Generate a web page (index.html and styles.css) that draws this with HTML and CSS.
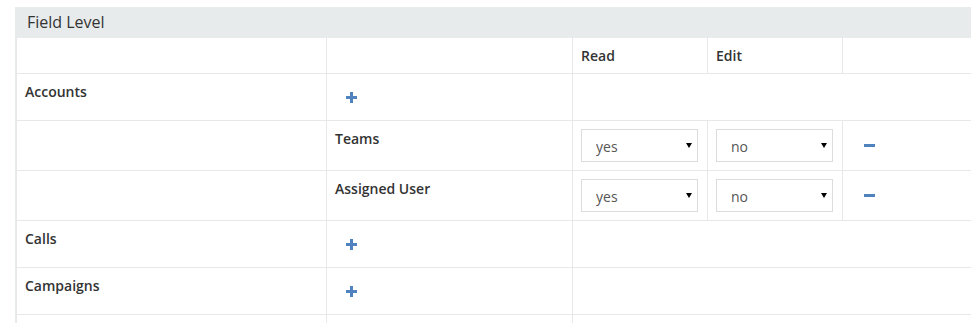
FILE: index.html
```html
<!DOCTYPE html>
<html lang="en">
<head>
    <meta charset="UTF-8">
    <meta name="viewport" content="width=device-width, initial-scale=1.0">
    <title>Field Level</title>
    <link rel="stylesheet" href="styles.css">
</head>
<body>
    <div class="panel">
        <div class="panel-heading">Field Level</div>
        <table class="field-table">
            <thead>
                <tr>
                    <th class="col-scope"></th>
                    <th class="col-field"></th>
                    <th class="col-action">Read</th>
                    <th class="col-action">Edit</th>
                    <th></th>
                </tr>
            </thead>
            <tbody>
                <tr>
                    <td class="scope-name">Accounts</td>
                    <td><button class="icon-btn add-btn" title="Add field"><svg width="11" height="11" viewBox="0 0 11 11"><path d="M4 0h3v4h4v3H7v4H4V7H0V4h4z"/></svg></button></td>
                    <td colspan="3"></td>
                </tr>
                <tr>
                    <td></td>
                    <td class="field-name">Teams</td>
                    <td>
                        <div class="select-wrap">
                            <select class="level-select">
                                <option selected>yes</option>
                                <option>no</option>
                            </select>
                        </div>
                    </td>
                    <td>
                        <div class="select-wrap">
                            <select class="level-select">
                                <option>yes</option>
                                <option selected>no</option>
                            </select>
                        </div>
                    </td>
                    <td><button class="icon-btn remove-btn" title="Remove"><svg width="11" height="3" viewBox="0 0 11 3"><rect width="11" height="3"/></svg></button></td>
                </tr>
                <tr>
                    <td></td>
                    <td class="field-name">Assigned User</td>
                    <td>
                        <div class="select-wrap">
                            <select class="level-select">
                                <option selected>yes</option>
                                <option>no</option>
                            </select>
                        </div>
                    </td>
                    <td>
                        <div class="select-wrap">
                            <select class="level-select">
                                <option>yes</option>
                                <option selected>no</option>
                            </select>
                        </div>
                    </td>
                    <td><button class="icon-btn remove-btn" title="Remove"><svg width="11" height="3" viewBox="0 0 11 3"><rect width="11" height="3"/></svg></button></td>
                </tr>
                <tr>
                    <td class="scope-name">Calls</td>
                    <td><button class="icon-btn add-btn" title="Add field"><svg width="11" height="11" viewBox="0 0 11 11"><path d="M4 0h3v4h4v3H7v4H4V7H0V4h4z"/></svg></button></td>
                    <td colspan="3"></td>
                </tr>
                <tr>
                    <td class="scope-name">Campaigns</td>
                    <td><button class="icon-btn add-btn" title="Add field"><svg width="11" height="11" viewBox="0 0 11 11"><path d="M4 0h3v4h4v3H7v4H4V7H0V4h4z"/></svg></button></td>
                    <td colspan="3"></td>
                </tr>
                <tr class="row-partial">
                    <td></td>
                    <td></td>
                    <td colspan="3"></td>
                </tr>
            </tbody>
        </table>
    </div>
</body>
</html>
```

FILE: styles.css
```css
:root {
    --text: #333333;
    --border: #e6e8e9;
    --heading-bg: #e8ebec;
    --icon: #5083be;
}

* {
    margin: 0;
    padding: 0;
    box-sizing: border-box;
}

body {
    background: #ffffff;
    color: var(--text);
    font-family: 'Open Sans', 'Liberation Sans', sans-serif;
    font-size: 14px;
    line-height: 20px;
    overflow: hidden;
}

.panel {
    margin: 7px -30px 0 15px;
    border-left: 1px solid var(--heading-bg);
}

.panel-heading {
    background: var(--heading-bg);
    font-size: 16px;
    line-height: 21px;
    padding: 5px 11px 5px 11px;
    height: 31px;
}

.field-table {
    width: 100%;
    table-layout: fixed;
    border-collapse: separate;
    border-spacing: 0;
    border-left: 1px solid var(--border);
}

.field-table th,
.field-table td {
    text-align: left;
    vertical-align: top;
    padding: 8px;
    border-right: 1px solid var(--border);
    border-bottom: 1px solid var(--border);
}

.field-table th {
    font-weight: 600;
    padding-bottom: 7px;
    height: 36px;
}

.row-partial td {
    height: 46px;
}

.col-scope {
    width: 310px;
}

.col-field {
    width: 246px;
}

.col-action {
    width: 135px;
}

.scope-name,
.field-name {
    font-weight: 600;
}

.icon-btn {
    display: flex;
    align-items: center;
    justify-content: center;
    background: none;
    border: none;
    cursor: pointer;
    fill: var(--icon);
}

.add-btn {
    width: 33px;
    height: 30px;
}

.remove-btn {
    width: 37px;
    height: 33px;
}

.select-wrap {
    position: relative;
    width: 117px;
}

.select-wrap::after {
    content: '';
    position: absolute;
    right: 6px;
    top: 14px;
    border-left: 3.5px solid transparent;
    border-right: 3.5px solid transparent;
    border-top: 5px solid #000000;
    pointer-events: none;
}

.level-select {
    appearance: none;
    -webkit-appearance: none;
    display: block;
    width: 117px;
    height: 33px;
    padding: 2px 20px 0 14px;
    border: 1px solid #dcdcdc;
    border-radius: 0;
    background: #ffffff;
    color: #555555;
    font-family: inherit;
    font-size: 14px;
}
```
